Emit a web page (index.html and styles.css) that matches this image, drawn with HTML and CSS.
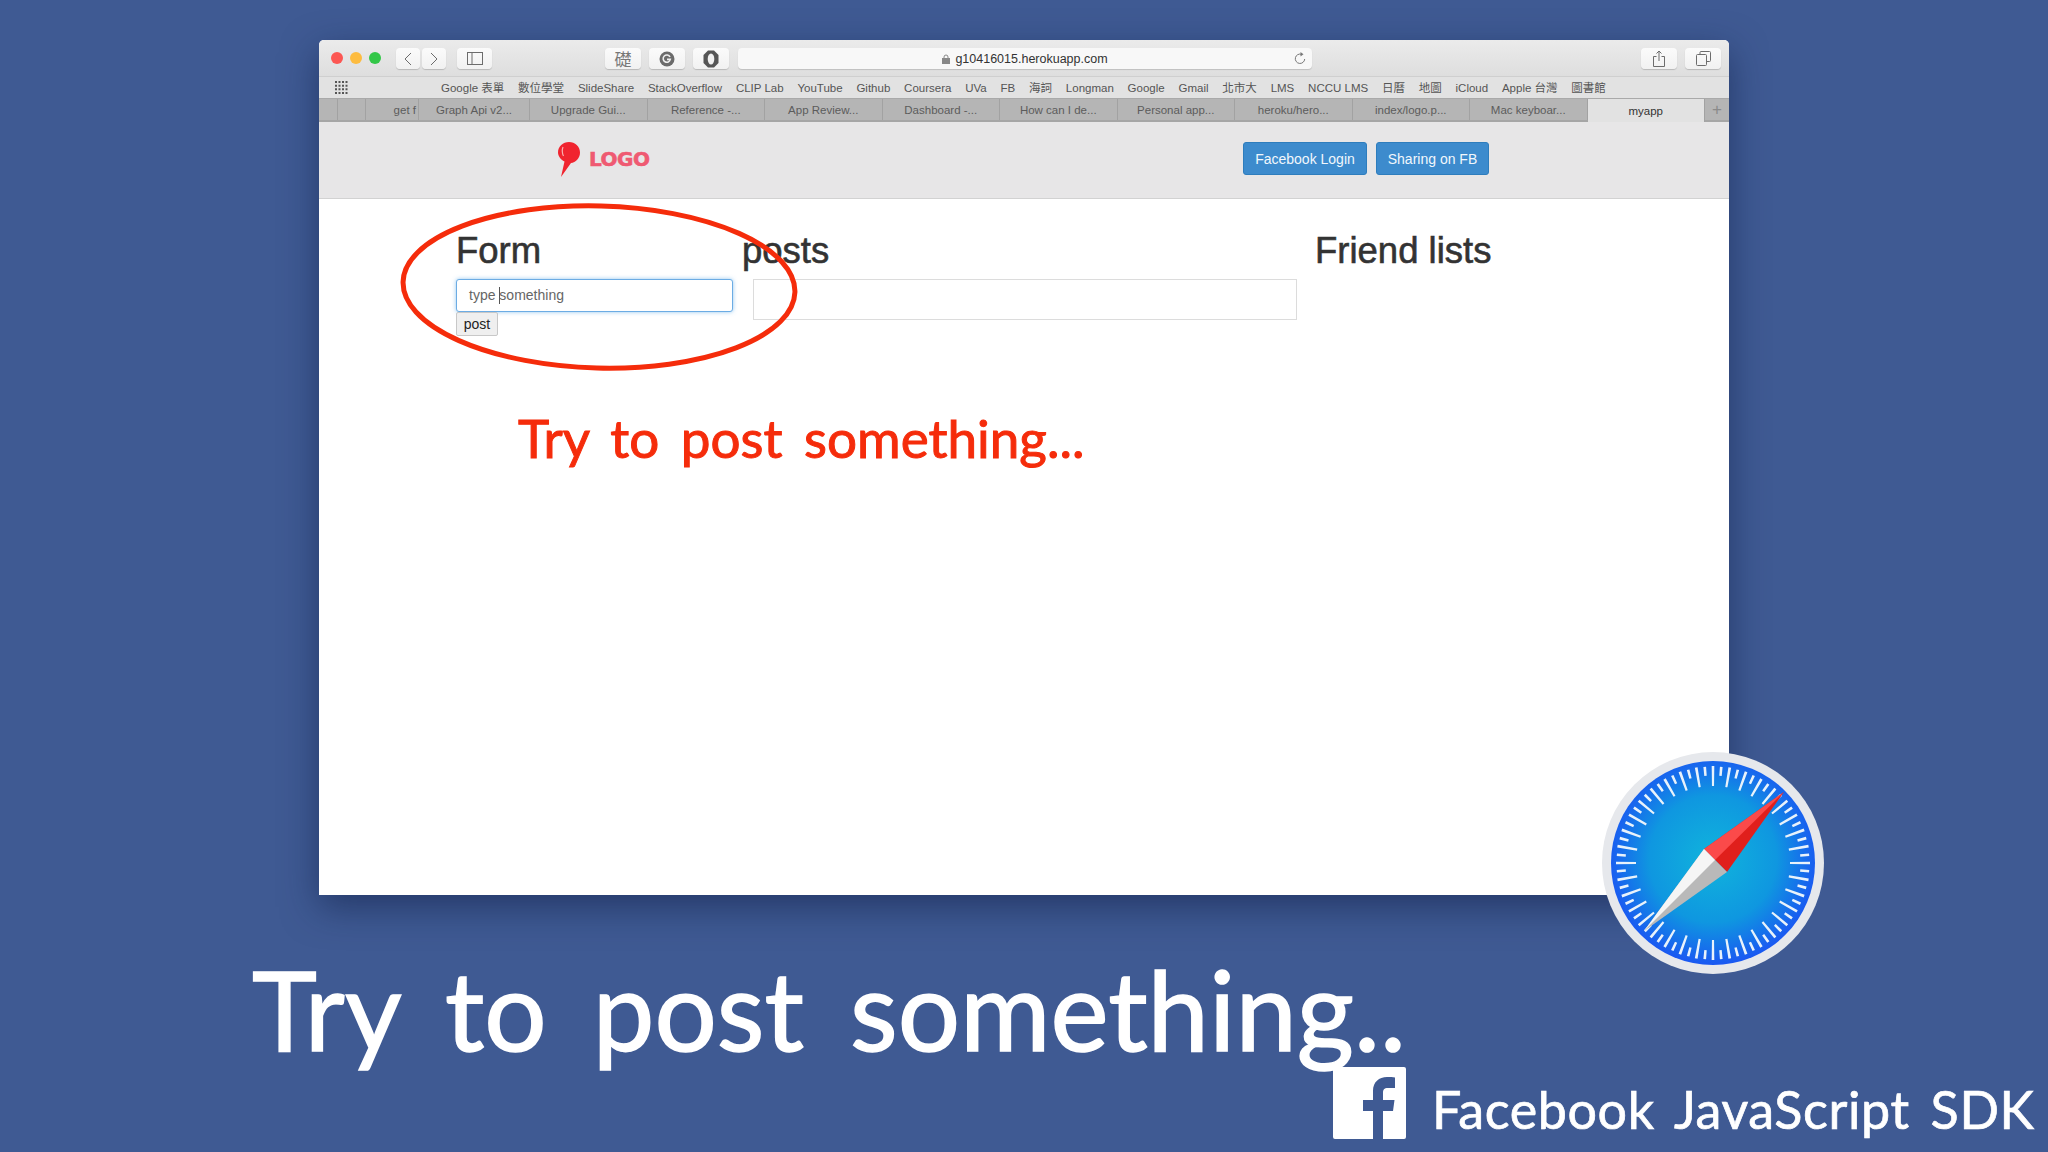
FILE: index.html
```html
<!DOCTYPE html>
<html lang="en">
<head>
  <meta charset="UTF-8" />
  <title>Try to post something</title>
  <link rel="stylesheet" href="styles.css">
</head>
<body>
  <div class="slide">
    <div class="window">
      <div class="toolbar">
        <div class="lights">
          <span class="light red"></span><span class="light yellow"></span><span class="light green"></span>
        </div>
        <div class="btn-pair">
          <span class="tool-btn nav-btn"><svg width="10" height="14" viewBox="0 0 10 14"><path d="M8 1 2 7l6 6" class="ic"/></svg></span>
          <span class="tool-btn nav-btn"><svg width="10" height="14" viewBox="0 0 10 14"><path d="m2 1 6 6-6 6" class="ic"/></svg></span>
        </div>
        <span class="tool-btn side-btn"><svg width="16" height="13" viewBox="0 0 16 13"><rect x=".5" y=".5" width="15" height="12" class="ic"/><path d="M5 .5v12" class="ic"/></svg></span>
        <span class="tool-btn ext-btn first-ext"><span class="ext-glyph">礎</span></span>
        <span class="tool-btn ext-btn"><svg width="16" height="16" viewBox="0 0 16 16"><circle cx="8" cy="8" r="7.5" fill="#6b6b6b"/><path d="M11 6a3.6 3.6 0 1 0 .3 2.4H8" fill="none" stroke="#eee" stroke-width="1.6"/></svg></span>
        <span class="tool-btn ext-btn"><svg width="16" height="18" viewBox="0 0 16 18"><path d="M5 .5h6L15.500 5v8L11 17.500H5L.5 13V5z" fill="#555"/><ellipse cx="8" cy="9" rx="3.300" ry="5.500" fill="#f0f0f0"/></svg></span>
        <div class="url-bar">
          <svg width="8" height="10" viewBox="0 0 8 10"><path d="M2 4V3a2 2 0 0 1 4 0v1" fill="none" stroke="#888"/><rect y="4" width="8" height="6" fill="#888"/></svg>
          <span class="url-text">g10416015.herokuapp.com</span>
          <svg class="reload" width="12" height="13" viewBox="0 0 12 13"><path d="M7.500 2.300A4.700 4.700 0 1 0 10.700 7" fill="none" stroke="#777"/><path d="M6.500 0v4.500L9.500 2.300z" fill="#777"/></svg>
        </div>
        <span class="tool-btn end-btn share-btn"><svg width="12" height="17" viewBox="0 0 12 17"><path d="M3.500 6.500H.5v10h11v-10h-3M6 11V1M3.500 3.500 6 1l2.500 2.500" class="ic"/></svg></span>
        <span class="tool-btn end-btn"><svg width="15" height="15" viewBox="0 0 15 15"><rect x=".5" y="3.500" width="10" height="11" rx="1" class="ic"/><path d="M4 3.500V1.500a1 1 0 0 1 1-1h8.500a1 1 0 0 1 1 1v8a1 1 0 0 1-1 1h-3" class="ic"/></svg></span>
      </div>

      <div class="bookmarks">
        <svg class="apps" width="16" height="13" viewBox="0 0 16 13"><path d="M1 1h14M1 4.700h14M1 8.300h14M1 12h14" stroke="#555" stroke-width="2" stroke-dasharray="2 1.500"/></svg>
        <div class="bookmark-list">
          <span>Google 表單</span><span>數位學堂</span><span>SlideShare</span><span>StackOverflow</span><span>CLIP Lab</span><span>YouTube</span><span>Github</span><span>Coursera</span><span>UVa</span><span>FB</span><span>海詞</span><span>Longman</span><span>Google</span><span>Gmail</span><span>北市大</span><span>LMS</span><span>NCCU LMS</span><span>日曆</span><span>地圖</span><span>iCloud</span><span>Apple 台灣</span><span>圖書館</span>
        </div>
      </div>

      <div class="tabs">
        <span class="tab pinned"></span>
        <span class="tab pinned wide"></span>
        <span class="tab stub">get f</span>
        <span class="tab short-tab">Graph Api v2...</span>
        <span class="tab">Upgrade Gui...</span>
        <span class="tab">Reference -...</span>
        <span class="tab">App Review...</span>
        <span class="tab">Dashboard -...</span>
        <span class="tab">How can I de...</span>
        <span class="tab">Personal app...</span>
        <span class="tab">heroku/hero...</span>
        <span class="tab">index/logo.p...</span>
        <span class="tab">Mac keyboar...</span>
        <span class="tab active">myapp</span>
        <span class="tab new-tab">+</span>
      </div>

      <div class="app-nav">
        <div class="brand">
          <svg width="22" height="35" viewBox="0 0 22 35"><path d="M11 0c6 0 11 4.500 11 10.500 0 6-4.500 10-9 10.500L3 35l3.500-15.500C2.500 17.500 0 14 0 10.500 0 4.500 5 0 11 0z" fill="#f0242f"/><path d="M5 5c-1.200 3-1 6 .5 9" fill="none" stroke="#f7b0b0" stroke-width="1.200"/></svg>
          <span class="brand-name">LOGO</span>
        </div>
        <div class="nav-actions">
          <button class="fb-btn login-btn">Facebook Login</button>
          <button class="fb-btn share-fb">Sharing on FB</button>
        </div>
      </div>

      <div class="content">
        <div class="col form-col">
          <h2>Form</h2>
          <div class="text-input focused">type <span class="caret"></span>something</div>
          <button class="post-btn">post</button>
        </div>
        <div class="col posts-col">
          <h2>posts</h2>
          <div class="text-input posts-box"></div>
        </div>
        <div class="col">
          <h2>Friend lists</h2>
        </div>
      </div>
    </div>

    <svg class="circle-note" width="410" height="180" viewBox="0 0 410 180"><ellipse cx="205" cy="90" rx="196" ry="81" fill="none" stroke="#f52c0b" stroke-width="5" transform="rotate(1.500 205 90)"/></svg>
    <div class="red-note">Try to post something...</div>

    <svg class="safari" width="224" height="224" viewBox="0 0 224 224">
      <defs>
        <radialGradient id="dial" cx="50%" cy="48%" r="52%">
          <stop offset="0" stop-color="#10b4dc"/>
          <stop offset=".6" stop-color="#0f97e0"/>
          <stop offset="1" stop-color="#1a58f2"/>
        </radialGradient>
      </defs>
      <circle cx="112" cy="112" r="111" fill="#e6e8ec"/>
      <circle cx="112" cy="112" r="102" fill="url(#dial)"/>
      <circle cx="112" cy="112" r="87" fill="none" stroke="#e8f2fb" stroke-width="20" pathLength="360" stroke-dasharray="1.600 8.400" stroke-dashoffset=".8"/>
      <circle cx="112" cy="112" r="92" fill="none" stroke="#e8f2fb" stroke-width="9" pathLength="360" stroke-dasharray="1.600 8.400" stroke-dashoffset="5.800"/>
      <path d="M183 41 103 98l23 23z" fill="#e01f1c"/>
      <path d="M183 41 103 98l11 11z" fill="#fb4a4a"/>
      <path d="M43 180 103 98l23 23z" fill="#b9b9b9"/>
      <path d="M43 180 103 98l11 11z" fill="#f5f5f5"/>
    </svg>

    <div class="big-title">Try to post something..</div>
    <svg class="fb-logo" width="73" height="72" viewBox="0 0 73 72"><path d="M2 0h69a2 2 0 0 1 2 2v68a2 2 0 0 1-2 2H50V44h10l1.500-11H50v-7c0-3.300 1-5 5-5h7V10.500C60 10 57 10 54 10c-8 0-14 5-14 14v9H30v11h10v28H2a2 2 0 0 1-2-2V2a2 2 0 0 1 2-2z" fill="#fff"/></svg>
    <div class="caption">Facebook JavaScript SDK</div>
  </div>
</body>
</html>
```

FILE: styles.css
```css
body {
  margin: 0;
  background: #3f5a93;
  font-family: "Liberation Sans", Arial, sans-serif;
}
.slide {
  position: relative;
  width: 2048px;
  height: 1152px;
  overflow: hidden;
  padding: 40px 0 0 319px;
  box-sizing: border-box;
}
.window {
  width: 1410px;
  height: 855px;
  background: #fff;
  border-radius: 5px 5px 0 0;
  box-shadow: 0 12px 36px rgba(15, 30, 70, 0.55);
  display: flex;
  flex-direction: column;
}

/* browser toolbar */
.toolbar {
  height: 37px;
  box-sizing: border-box;
  display: flex;
  align-items: flex-start;
  padding-top: 8px;
  background: linear-gradient(#ebebeb, #dedede);
  border-bottom: 1px solid #cfcfcf;
  border-radius: 5px 5px 0 0;
}
.lights {
  display: flex;
  gap: 7px;
  margin: 4px 0 0 12px;
}
.light {
  width: 12px;
  height: 12px;
  border-radius: 50%;
}
.red { background: #fc5753; }
.yellow { background: #fdbc40; }
.green { background: #33c748; }
.tool-btn {
  height: 21px;
  display: flex;
  align-items: center;
  justify-content: center;
  background: linear-gradient(#fbfbfb, #f1f1f1);
  border-radius: 4px;
  box-shadow: 0 1px 1px rgba(0, 0, 0, 0.18);
}
.ic {
  fill: none;
  stroke: #6c6c6c;
  stroke-width: 1;
}
.btn-pair {
  display: flex;
  gap: 2px;
  margin-left: 15px;
}
.nav-btn { width: 24px; }
.side-btn {
  width: 35px;
  margin-left: 11px;
}
.ext-btn {
  width: 36px;
  margin-left: 8px;
}
.first-ext { margin-left: 113px; }
.ext-glyph {
  font-family: "Noto Sans CJK TC", sans-serif;
  font-size: 17px;
  color: #777;
}
.url-bar {
  width: 574px;
  height: 21px;
  margin-left: 9px;
  display: flex;
  align-items: center;
  justify-content: center;
  gap: 5px;
  position: relative;
  background: #f8f8f8;
  border-radius: 4px;
  box-shadow: 0 1px 1px rgba(0, 0, 0, 0.15);
}
.url-text {
  font-size: 12.5px;
  color: #333;
}
.reload {
  position: absolute;
  right: 6px;
  top: 4px;
}
.end-btn {
  width: 36px;
  margin-left: 8px;
}
.share-btn { margin-left: 329px; }

/* bookmarks */
.bookmarks {
  height: 21px;
  flex: none;
  display: flex;
  align-items: center;
  background: #e2e2e2;
}
.apps { margin-left: 15px; }
.bookmark-list {
  display: flex;
  align-items: baseline;
  gap: 13.800px;
  margin: 1px 0 0 91px;
  height: 21px;
  line-height: 21px;
  font-size: 11.500px;
  color: #555;
  font-family: "Liberation Sans", "Noto Sans CJK TC", sans-serif;
  white-space: nowrap;
}

/* tabs */
.tabs {
  height: 24px;
  flex: none;
  display: flex;
  box-sizing: border-box;
  background: #b5b5b5;
  border-top: 1px solid #a9a9a9;
  border-bottom: 2px solid #a6a6a6;
  font-size: 11.500px;
  color: #5c5c5c;
}
.tab {
  width: 117.500px;
  flex: none;
  box-sizing: border-box;
  display: flex;
  align-items: center;
  justify-content: center;
  border-right: 1px solid #a2a2a2;
  white-space: nowrap;
}
.pinned { width: 19px; }
.pinned.wide { width: 28px; }
.stub {
  width: 53px;
  justify-content: flex-end;
  padding-right: 2px;
}
.short-tab { width: 111px; }
.active {
  background: #e2e2e2;
  color: #333;
  height: 24px;
  border-bottom: 0;
  margin-bottom: -2px;
}
.new-tab {
  flex: 1;
  width: auto;
  border-right: 0;
  font-size: 17px;
  font-weight: 300;
  color: #8a8a8a;
}

/* app navbar */
.app-nav {
  height: 77px;
  flex: none;
  box-sizing: border-box;
  padding: 20px 240px 0 239px;
  display: flex;
  justify-content: space-between;
  align-items: flex-start;
  background: #e7e6e7;
  border-bottom: 1px solid #d2d2d2;
}
.brand {
  display: flex;
  align-items: center;
  gap: 9px;
}
.brand-name {
  margin-top: -2px;
  font-family: "DejaVu Sans", sans-serif;
  font-weight: 700;
  font-size: 20px;
  letter-spacing: -0.5px;
  color: #ef5a72;
  -webkit-text-stroke: 0.6px #ef5a72;
}
.nav-actions {
  display: flex;
  gap: 9px;
}
.fb-btn {
  height: 33px;
  padding: 0;
  border: 1px solid #2e7dbd;
  border-radius: 3px;
  background: #3d8bcd;
  color: #f1f7fc;
  font: 14px "Liberation Sans", sans-serif;
}
.login-btn { width: 124px; }
.share-fb { width: 113px; }

/* page content */
.content {
  display: flex;
  padding-left: 137px;
}
.col { flex: none; }
.form-col { width: 286px; }
.posts-col { width: 573px; }
h2 {
  margin: 31px 0 8px;
  height: 41px;
  font-size: 36.500px;
  line-height: 41px;
  font-weight: 400;
  color: #333;
  -webkit-text-stroke: 0.6px #333;
}
.text-input {
  box-sizing: border-box;
  border: 1px solid #dcdcdc;
  background: #fff;
}
.focused {
  width: 277px;
  height: 33px;
  padding-left: 12px;
  border-color: #6cace4;
  border-radius: 3px;
  box-shadow: 0 0 4px rgba(102, 175, 233, 0.7);
  font-size: 14px;
  line-height: 31px;
  color: #666;
  white-space: nowrap;
}
.caret {
  display: inline-block;
  width: 1px;
  height: 17px;
  margin-right: -1px;
  background: #555;
  vertical-align: -4px;
}
.posts-box {
  width: 544px;
  height: 41px;
  margin-left: 11px;
}
.post-btn {
  display: block;
  width: 42px;
  height: 24px;
  padding: 0;
  border: 1px solid #c8c8c8;
  border-radius: 2px;
  background: #efefef;
  color: #222;
  font: 14px "Liberation Sans", sans-serif;
}

/* slide overlays */
.circle-note {
  position: absolute;
  left: 394px;
  top: 197px;
}
.red-note,
.big-title,
.caption {
  position: absolute;
  font-family: Lato, sans-serif;
  white-space: nowrap;
}
.red-note {
  left: 518px;
  top: 404px;
  font-size: 53px;
  line-height: 68px;
  word-spacing: 8px;
  color: #f52c0b;
  -webkit-text-stroke: 1px #f52c0b;
}
.safari {
  position: absolute;
  left: 1601px;
  top: 751px;
}
.big-title {
  left: 252px;
  top: 943px;
  font-size: 110px;
  line-height: 130px;
  word-spacing: 18px;
  color: #fff;
  -webkit-text-stroke: 1.5px #fff;
}
.fb-logo {
  position: absolute;
  left: 1333px;
  top: 1067px;
}
.caption {
  left: 1432px;
  top: 1078px;
  font-size: 52px;
  line-height: 62px;
  letter-spacing: 0.6px;
  word-spacing: 7px;
  color: #fff;
  -webkit-text-stroke: 0.7px #fff;
}
```
